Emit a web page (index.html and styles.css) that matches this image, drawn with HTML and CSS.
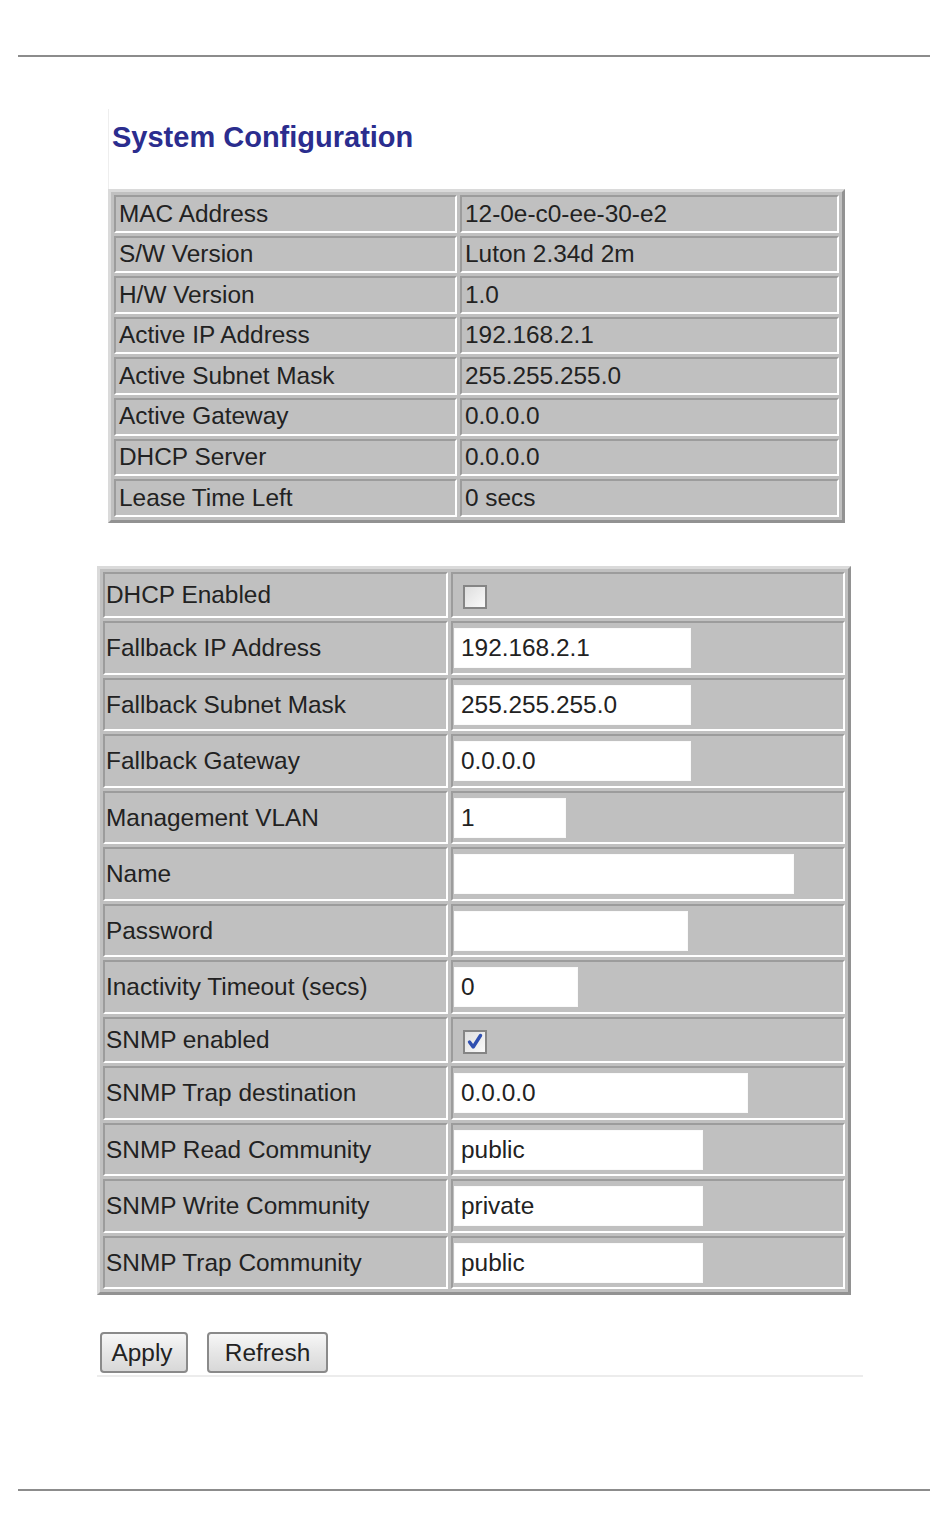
FILE: index.html
```html
<!DOCTYPE html>
<html>
	<head>
		<title>System Configuration</title>
		<meta charset="utf-8"/>
		<link rel="stylesheet" href="styles.css">
	</head>
	<body>
		<div class="rule"></div>
		<div id="content">
			<div class="head">
				<h1>System Configuration</h1>
			</div>
			<table class="status">
				<tr><td class="label">MAC Address</td><td>12-0e-c0-ee-30-e2</td></tr>
				<tr><td class="label">S/W Version</td><td>Luton 2.34d 2m</td></tr>
				<tr><td class="label">H/W Version</td><td>1.0</td></tr>
				<tr><td class="label">Active IP Address</td><td>192.168.2.1</td></tr>
				<tr><td class="label">Active Subnet Mask</td><td>255.255.255.0</td></tr>
				<tr><td class="label">Active Gateway</td><td>0.0.0.0</td></tr>
				<tr><td class="label">DHCP Server</td><td>0.0.0.0</td></tr>
				<tr><td class="label">Lease Time Left</td><td>0 secs</td></tr>
			</table>
			<form>
				<table class="config">
					<tr class="flag">
						<td class="label">DHCP Enabled</td>
						<td class="field"><span class="checkbox"></span></td></tr>
					<tr>
						<td class="label">Fallback IP Address</td>
						<td class="field"><input type="text" class="w-ip" value="192.168.2.1"></td></tr>
					<tr>
						<td class="label">Fallback Subnet Mask</td>
						<td class="field"><input type="text" class="w-ip" value="255.255.255.0"></td></tr>
					<tr>
						<td class="label">Fallback Gateway</td>
						<td class="field"><input type="text" class="w-ip" value="0.0.0.0"></td></tr>
					<tr>
						<td class="label">Management VLAN</td>
						<td class="field"><input type="text" class="w-vlan" value="1"></td></tr>
					<tr>
						<td class="label">Name</td>
						<td class="field"><input type="text" class="w-name" value=""></td></tr>
					<tr>
						<td class="label">Password</td>
						<td class="field"><input type="password" class="w-pass" value=""></td></tr>
					<tr>
						<td class="label">Inactivity Timeout (secs)</td>
						<td class="field"><input type="text" class="w-timeout" value="0"></td></tr>
					<tr class="flag">
						<td class="label">SNMP enabled</td>
						<td class="field"><span class="checkbox on"><svg viewBox="0 0 20 20" width="20" height="20"><path d="M4.5 10 L8.2 15 L15.5 3.5" fill="none" stroke="#2f4fb0" stroke-width="3.4" stroke-linecap="round" stroke-linejoin="round"/></svg></span></td></tr>
					<tr>
						<td class="label">SNMP Trap destination</td>
						<td class="field"><input type="text" class="w-trap" value="0.0.0.0"></td></tr>
					<tr>
						<td class="label">SNMP Read Community</td>
						<td class="field"><input type="text" class="w-comm" value="public"></td></tr>
					<tr>
						<td class="label">SNMP Write Community</td>
						<td class="field"><input type="text" class="w-comm" value="private"></td></tr>
					<tr>
						<td class="label">SNMP Trap Community</td>
						<td class="field"><input type="text" class="w-comm" value="public"></td></tr>
				</table>
				<div class="buttons">
					<button type="button" class="apply">Apply</button>
					<button type="button" class="refresh">Refresh</button>
				</div>
			</form>
		</div>
		<div class="rule bottom"></div>
	</body>
</html>
```

FILE: styles.css
```css
html { width:100%; }
body {
	color:#222;
	background:#fff;
	margin:0px;
	font-family:"Liberation Sans", Arial, sans-serif;
	font-size:24.4px;
}

.rule {
	height:2px;
	background:#8c8c8c;
	margin:55px 20px 0px 18px;
}
.rule.bottom { margin-top:112px; }

#content {
	margin-left:97px;
}

.head {
	margin-left:11px;
	height:68px;
	padding-top:12px;
	margin-top:52px;
	border-left:1px solid #eeeeee;
}
h1 {
	margin:0px;
	padding-left:3px;
	font-size:29px;
	line-height:33px;
	font-weight:bold;
	color:#2b2d8e;
}

/* old-school beveled tables */
table {
	border-collapse:separate;
	border-spacing:3px;
	background:#c0c0c0;
	border:3px solid;
	border-color:#dadada #929292 #929292 #dadada;
	font-size:24.4px;
}
td {
	border:2px solid;
	border-color:#9c9c9c #ffffff #ffffff #9c9c9c;
	white-space:nowrap;
	vertical-align:middle;
}

.status {
	margin-left:11px;
	width:737px;
}
.status td {
	padding:2.5px 5px 2.5px 3px;
	line-height:28.6px;
}
.status td.label { width:331px; }

.config {
	margin-top:43px;
	width:754px;
}
.config td {
	padding:4.75px 4px 4.75px 1px;
	line-height:28px;
}
.config td.label { width:336px; }
.config tr.flag td {
	padding-top:7.25px;
	padding-bottom:7.25px;
}

input[type=text], input[type=password] {
	display:block;
	box-sizing:border-box;
	height:40px;
	margin:0px;
	padding:0px 6px;
	border:1px solid #fafafa;
	background:#fff;
	font-family:inherit;
	font-size:24.4px;
	color:#222;
	outline:none;
}
.w-ip { width:237px; }
.w-vlan { width:112px; }
.w-name { width:340px; }
.w-pass { width:234px; }
.w-timeout { width:124px; }
.w-trap { width:294px; }
.w-comm { width:249px; }

.checkbox {
	display:inline-flex;
	align-items:center;
	justify-content:center;
	box-sizing:border-box;
	width:24px;
	height:24px;
	margin-left:9px;
	vertical-align:middle;
	border:2px solid #858585;
	background:linear-gradient(135deg, #dedede, #fafafa);
}

.buttons {
	margin-top:37px;
	width:763px;
	padding:0px 0px 2px 3px;
	border-bottom:2px solid #ececec;
	display:flex;
	gap:19px;
}
button {
	height:41px;
	padding:0px;
	border:2px solid #8a8a8a;
	border-radius:4px;
	background:linear-gradient(#f7f7f7, #e6e6e6 50%, #d8d8d8);
	font-family:inherit;
	font-size:24.4px;
	color:#222;
}
.apply { width:88px; padding-right:4px; }
.refresh { width:121px; }
```
